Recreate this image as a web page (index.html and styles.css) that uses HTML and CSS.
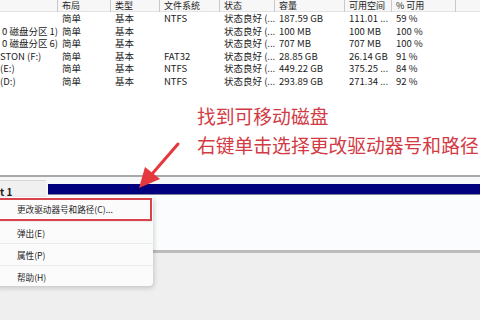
FILE: index.html
```html
<!DOCTYPE html>
<html lang="zh-CN">
<head>
<meta charset="utf-8">
<link rel="stylesheet" href="styles.css">
</head>
<body>
<div class="screen">
  <div class="volumes">
    <div class="grid head">
      <div class="hc"></div>
      <div class="hc">布局</div>
      <div class="hc">类型</div>
      <div class="hc">文件系统</div>
      <div class="hc">状态</div>
      <div class="hc">容量</div>
      <div class="hc">可用空间</div>
      <div class="hc">% 可用</div>
      <div class="hc last"></div>
    </div>
    <div class="grid row"><div class="c name"></div><div class="c">简单</div><div class="c">基本</div><div class="c">NTFS</div><div class="c">状态良好 (...</div><div class="c">187.59 GB</div><div class="c">111.01 ...</div><div class="c">59 %</div><div></div></div>
    <div class="grid row"><div class="c name">0 磁盘分区 1)</div><div class="c">简单</div><div class="c">基本</div><div class="c"></div><div class="c">状态良好 (...</div><div class="c">100 MB</div><div class="c">100 MB</div><div class="c">100 %</div><div></div></div>
    <div class="grid row"><div class="c name">0 磁盘分区 6)</div><div class="c">简单</div><div class="c">基本</div><div class="c"></div><div class="c">状态良好 (...</div><div class="c">707 MB</div><div class="c">707 MB</div><div class="c">100 %</div><div></div></div>
    <div class="grid row"><div class="c name flush">STON (F:)</div><div class="c">简单</div><div class="c">基本</div><div class="c">FAT32</div><div class="c">状态良好 (...</div><div class="c">28.85 GB</div><div class="c">26.14 GB</div><div class="c">91 %</div><div></div></div>
    <div class="grid row"><div class="c name flush">(E:)</div><div class="c">简单</div><div class="c">基本</div><div class="c">NTFS</div><div class="c">状态良好 (...</div><div class="c">449.22 GB</div><div class="c">375.25 ...</div><div class="c">84 %</div><div></div></div>
    <div class="grid row"><div class="c name flush">(D:)</div><div class="c">简单</div><div class="c">基本</div><div class="c">NTFS</div><div class="c">状态良好 (...</div><div class="c">293.89 GB</div><div class="c">271.34 ...</div><div class="c">92 %</div><div></div></div>
  </div>

  <div class="note">
    <p>找到可移动磁盘</p>
    <p>右键单击选择更改驱动器号和路径</p>
  </div>

  <div class="disks">
    <div class="disk-row">
      <div class="disk-label">t 1</div>
      <div class="disk-body">
        <div class="bar"></div>
        <div class="part"></div>
      </div>
    </div>
  </div>
  <div class="bottom"></div>

  <svg class="arrow" width="60" height="60" viewBox="0 0 60 60">
    <line x1="48" y1="6" x2="22" y2="36" stroke="#e5383e" stroke-width="3" stroke-linecap="round"/>
    <polygon points="9,50 15,29 30,41" fill="#e5383e"/>
  </svg>

  <div class="menu">
    <div class="item hl">更改驱动器号和路径(C)...</div>
    <div class="item">弹出(E)</div>
    <div class="item">属性(P)</div>
    <div class="item">帮助(H)</div>
  </div>
</div>
</body>
</html>
```

FILE: styles.css
```css
* { box-sizing: border-box; }
html, body { margin: 0; padding: 0; }
body {
  width: 480px;
  height: 320px;
  overflow: hidden;
  background: #ffffff;
  font-family: "Noto Sans CJK SC", "Noto Sans", sans-serif;
  color: #1c1c1c;
}
.screen {
  position: relative;
  width: 480px;
  height: 320px;
  overflow: hidden;
  display: flex;
  flex-direction: column;
}
.volumes {
  height: 106px;
  background: #fff;
}
.grid {
  display: grid;
  grid-template-columns: 58px 53px 49px 60px 55px 70px 47px 64px 1fr;
}
.head {
  height: 12px;
  background: #f7f7f7;
  box-shadow: inset 0 -1px 0 #e2e2e2;
}
.hc {
  font-size: 9px;
  line-height: 11px;
  height: 12px;
  padding-left: 4px;
  padding-top: 0;
  border-right: 1px solid #c9c9c9;
  white-space: nowrap;
}
.hc.last { border-right: none; }
.row { height: 12.6px; }
.c {
  font-size: 9.5px;
  line-height: 12.6px;
  padding-left: 4px;
  white-space: nowrap;
  overflow: hidden;
}
.c.name { padding-left: 2px; }
.c.name.flush { padding-left: 0; }

.note {
  height: 69px;
  padding-left: 197px;
  color: #d23a44;
  font-size: 18.8px;
  line-height: 29px;
}
.note p { margin: 0; white-space: nowrap; position: relative; top: -5px; }

.disks {
  height: 78px;
  border-top: 2px solid #a9a9a9;
  background: #f6f7f9;
}
.disk-row {
  display: flex;
  padding-top: 3px;
  height: 100%;
}
.disk-label {
  width: 46px;
  height: 70px;
  background: #f0f0f0;
  border-top: 1px solid #d8d8d8;
  font-size: 10px;
  font-weight: bold;
  line-height: 20px;
  padding-top: 1px;
}
.disk-body {
  flex: 1;
  margin-left: 2px;
  display: flex;
  flex-direction: column;
  padding-top: 4px;
}
.bar {
  height: 11px;
  background: #00007f;
  border-bottom: 1px solid #8080a0;
}
.part {
  flex: 1;
  background: #fbfcfe;
  border-bottom: 3px solid #bcbcbc;
}
.bottom {
  flex: 1;
  background: #efeff0;
}

.arrow {
  position: absolute;
  left: 130px;
  top: 138px;
}

.menu {
  position: absolute;
  left: -4px;
  top: 197px;
  width: 157px;
  height: 89px;
  background: #fbfbfb;
  box-shadow: 1px 2px 5px rgba(0,0,0,0.18);
  border-radius: 0 0 4px 0;
  padding-top: 1px;
}
.item {
  height: 22px;
  padding-left: 21px;
  font-size: 8.6px;
  line-height: 22px;
  color: #1e1e1e;
  border-top: 1px solid #ececec;
  white-space: nowrap;
}
.item:first-child { border-top: none; }
.item.hl {
  height: 23px;
  line-height: 19px;
  padding-left: 19px;
  border: 2px solid #d9444c;
  margin-right: 1px;
}
```
